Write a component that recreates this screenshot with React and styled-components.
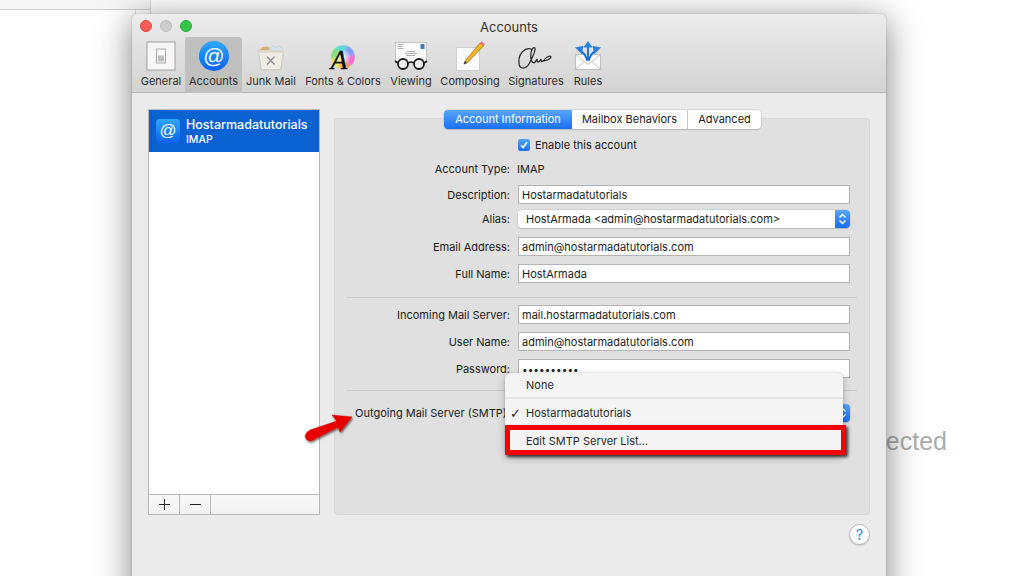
import React from "react";
import styled, { createGlobalStyle } from "styled-components";

const Global = createGlobalStyle`
  html, body { margin: 0; padding: 0; height: 100%; background: #fff; overflow: hidden; }
  * { box-sizing: border-box; }
  #root { height: 100%; }
`;

const font = `Inter, "Liberation Sans", Arial, sans-serif`;

const Page = styled.div`
  position: relative;
  width: 1024px;
  height: 576px;
  background: #fff;
  overflow: hidden;
  font-family: ${font};
  padding: 14px 0 0 132px;
`;
const BehindColumn = styled.div`
  position: absolute;
  left: 0;
  top: 0;
  width: 151px;
  height: 576px;
  background: #fff;
  border-right: 1px solid #dcdcdc;
`;
const BehindStrip = styled.div`
  position: absolute;
  left: 0;
  top: 0;
  width: 150px;
  height: 10px;
  background: #f6f6f6;
  border-bottom: 1px solid #cfcfcf;
`;
const BehindNotch = styled.div`
  position: absolute;
  left: 135px;
  top: 10px;
  width: 1px;
  height: 5px;
  background: #d8d8d8;
`;
const BehindText = styled.div`
  position: absolute;
  left: 700px;
  width: 247px;
  top: 426px;
  text-align: right;
  font-family: "Liberation Sans", Arial, sans-serif;
  font-size: 25px;
  line-height: 30px;
  color: #adadad;
  white-space: nowrap;
`;
const Window = styled.div`
  position: relative;
  width: 754px;
  height: 600px;
  background: #ebebeb;
  border-radius: 5px 5px 0 0;
  box-shadow: 0 6px 34px rgba(0,0,0,0.5), 0 0 1px rgba(0,0,0,0.6);
`;
const TitleBar = styled.div`
  position: relative;
  height: 79px;
  background: linear-gradient(#ececec, #d3d3d3);
  border-bottom: 1px solid #b5b5b5;
  border-radius: 5px 5px 0 0;
  padding-top: 23px;
`;
const Lights = styled.div`
  position: absolute;
  left: 8px;
  top: 6px;
  display: flex;
  gap: 8px;
`;
const Light = styled.span`
  width: 12px;
  height: 12px;
  border-radius: 50%;
  background: ${(p) => p.$c};
  border: 1px solid ${(p) => p.$b};
`;
const Title = styled.div`
  position: absolute;
  left: 0;
  right: 0;
  top: 5px;
  text-align: center;
  font-size: 13px;
  line-height: 16px;
  color: #333;
`;
const Tools = styled.div`
  display: flex;
  align-items: stretch;
  padding-left: 8px;
  height: 56px;
`;
const Tool = styled.div`
  width: ${(p) => p.$w}px;
  margin-left: ${(p) => p.$ml || 0}px;
  display: flex;
  flex-direction: column;
  align-items: center;
  border-radius: ${(p) => (p.$active ? "3px 3px 0 0" : "0")};
  background: ${(p) => (p.$active ? "#c0c0c0" : "transparent")};
`;
const ToolIcon = styled.div`
  height: 37px;
  width: 100%;
  display: flex;
  align-items: center;
  justify-content: center;
`;
const ToolLabel = styled.div`
  font-size: 11px;
  line-height: 14px;
  color: #2d2d2d;
  white-space: nowrap;
`;
const Body = styled.div`
  display: flex;
  padding: 16px 16px 0 16px;
  align-items: flex-start;
`;
const ListBox = styled.div`
  width: 172px;
  height: 406px;
  border: 1px solid #b8b8b8;
  background: #fff;
  display: flex;
  flex-direction: column;
  flex: none;
`;
const AccountRow = styled.div`
  height: 42px;
  background: #0a62d2;
  display: flex;
  align-items: center;
  padding-left: 7px;
  gap: 6px;
  color: #fff;
`;
const AccountText = styled.div`
  display: flex;
  flex-direction: column;
`;
const AccountName = styled.div`
  font-size: 12.5px;
  line-height: 15px;
  font-weight: 500;
`;
const AccountType = styled.div`
  margin-top: 1px;
  font-size: 10.5px;
  line-height: 13px;
  font-weight: 500;
`;
const ListSpacer = styled.div`
  flex: 1;
`;
const ListFooter = styled.div`
  height: 20px;
  border-top: 1px solid #b8b8b8;
  background: linear-gradient(#f9f9f9, #f3f3f3);
  display: flex;
`;
const FooterBtn = styled.div`
  width: 31px;
  border-right: 1px solid #b8b8b8;
  display: flex;
  align-items: center;
  justify-content: center;
`;
const Panel = styled.div`
  position: relative;
  margin: 9px 0 0 14px;
  width: 536px;
  height: 397px;
  background: #e0e0e0;
  border: 1px solid #d8d8d8;
  border-radius: 4px;
  padding-top: 16px;
`;
const Tabs = styled.div`
  position: absolute;
  left: 109px;
  top: -9px;
  display: flex;
  height: 19px;
  border-radius: 4px;
  background: #fff;
  box-shadow: 0 0 0 0.5px #c4c4c4, 0 1px 1px rgba(0,0,0,0.22);
  font-size: 11px;
`;
const Tab = styled.div`
  width: ${(p) => p.$w}px;
  display: flex;
  align-items: center;
  justify-content: center;
  padding-bottom: 1px;
  color: ${(p) => (p.$on ? "#fff" : "#222")};
  background: ${(p) => (p.$on ? "linear-gradient(#58a6fb, #1a6ff0)" : "transparent")};
  border-radius: ${(p) => (p.$on ? "4px 0 0 4px" : "0")};
  border-right: ${(p) => (p.$sep ? "1px solid #c8c8c8" : "none")};
`;
const Row = styled.div`
  display: flex;
  align-items: center;
  height: ${(p) => p.$h || 19}px;
  margin-top: ${(p) => p.$mt || 0}px;
  font-size: 11px;
  color: #1a1a1a;
`;
const Label = styled.div`
  width: 175px;
  white-space: nowrap;
  flex: none;
  display: flex;
  justify-content: flex-end;
`;
const Control = styled.div`
  margin-left: 8px;
  width: 332px;
  flex: none;
`;
const Value = styled.div`
  margin-left: 7px;
`;
const Field = styled.div`
  height: ${(p) => p.$h || 19}px;
  width: 332px;
  background: #fff;
  border: 1px solid #b4b4b4;
  padding-left: 3px;
  display: flex;
  align-items: center;
  font-size: 11px;
  color: #222;
`;
const Dots = styled.span`
  font-size: 10px;
  letter-spacing: 0.05px;
  color: #222;
`;
const Select = styled.div`
  position: relative;
  width: 332px;
  height: 18px;
  background: #fff;
  border-radius: 4px;
  box-shadow: 0 0 0 0.5px #c4c4c4, 0 1px 1px rgba(0,0,0,0.22);
  padding-left: 8px;
  display: flex;
  align-items: center;
  font-size: 11px;
  color: #222;
`;
const SelectArrow = styled.div`
  position: absolute;
  right: 0;
  top: 0;
  width: 15px;
  height: 18px;
  border-radius: 0 4px 4px 0;
  background: linear-gradient(#5aa7fb, #176bee);
  display: flex;
  align-items: center;
  justify-content: center;
`;
const Checkbox = styled.div`
  width: 12px;
  height: 12px;
  border-radius: 2.5px;
  background: linear-gradient(#56a5fb, #1b70f0);
  display: flex;
  align-items: center;
  justify-content: center;
`;
const CheckLabel = styled.div`
  display: flex;
  align-items: center;
  gap: 5px;
`;
const Divider = styled.div`
  height: 1px;
  background: #c9c9c9;
  margin: ${(p) => p.$m};
  margin-left: 12px;
  margin-right: 12px;
`;
const Popup = styled.div`
  position: absolute;
  left: 373px;
  top: 359px;
  width: 338px;
  height: 82px;
  background: #f4f4f4;
  border-radius: 5px;
  box-shadow: 0 0 1px rgba(0,0,0,0.35), 0 3px 8px rgba(0,0,0,0.25);
  font-size: 11px;
  color: #2a2a2a;
  display: flex;
  flex-direction: column;
  z-index: 3;
`;
const PopupItem = styled.div`
  position: relative;
  height: ${(p) => p.$h}px;
  padding-left: 21px;
  display: flex;
  align-items: center;
  flex: none;
`;
const PopupSep = styled.div`
  height: 1.5px;
  background: #e3e3e3;
  flex: none;
`;
const Tick = styled.span`
  position: absolute;
  left: 5px;
  font-family: "DejaVu Sans", sans-serif;
  font-size: 13px;
  font-weight: 700;
  color: #222;
`;
const RedBox = styled.div`
  position: absolute;
  left: 373px;
  top: 411px;
  width: 341px;
  height: 30px;
  border: 5px solid #f50000;
  box-shadow: 2px 2px 3px rgba(0,0,0,0.75);
  z-index: 4;
`;
const Arrow = styled.svg`
  position: absolute;
  left: 170px;
  top: 394px;
  z-index: 4;
  overflow: visible;
`;
const Help = styled.div`
  position: absolute;
  left: 717px;
  top: 510px;
  width: 21px;
  height: 21px;
  border-radius: 50%;
  background: #fff;
  border: 1px solid #b9b9b9;
  box-shadow: 0 1px 1px rgba(0,0,0,0.15);
  color: #2a80f5;
  font-size: 14px;
  font-weight: 400;
  display: flex;
  align-items: center;
  justify-content: center;
`;

const GeneralIcon = () => (
  <svg width="32" height="32" viewBox="0 0 32 32">
    <rect x="2" y="2" width="28" height="28" fill="#f7f7f7" stroke="#a0a0a0" />
    <rect x="11.5" y="9" width="9" height="14" fill="#f2f2f2" stroke="#9c9c9c" strokeWidth=".8" />
    <rect x="13" y="10.5" width="6" height="5" fill="#fff" />
    <rect x="13" y="15.5" width="6" height="6" fill="#bcc2c2" />
  </svg>
);
const AtIcon = ({ s = 30, r = 15, square }) => (
  <svg width={s} height={s} viewBox="0 0 30 30">
    <defs>
      <linearGradient id={square ? "atg2" : "atg"} x1="0" y1="0" x2="0" y2="1">
        <stop offset="0" stopColor="#2fa8fb" />
        <stop offset="1" stopColor="#0a62ef" />
      </linearGradient>
    </defs>
    {square ? (
      <rect width="30" height="30" rx="5" fill={`url(#atg2)`} />
    ) : (
      <circle cx="15" cy="15" r={r} fill={`url(#atg)`} />
    )}
    <text x="15" y="21.5" textAnchor="middle" fontFamily={`"Liberation Sans", sans-serif`} fontSize="21" fill="#fff">@</text>
  </svg>
);
const JunkIcon = () => (
  <svg width="28" height="31" viewBox="0 -5 32 35.4">
    <path d="M3 6 Q8 0 15 4 L13 8 H3Z" fill="#d9b27a" />
    <path d="M14 5 Q18 0 22 4 Q26 -1 29 5 L28 8 H14Z" fill="#d5e4ec" stroke="#aebdc6" strokeWidth=".5" />
    <path d="M1.5 7.5 H30.5 L27 29 H5Z" fill="#eeece4" stroke="#c6c3b9" />
    <rect x="1" y="6.5" width="30" height="3" fill="#dad7cd" />
    <path d="M11.5 14 L20 23 M20 14 L11.5 23" stroke="#8d8a80" strokeWidth="1.6" />
  </svg>
);
const wedge = (a0, a1) => {
  const rad = (d) => (d * Math.PI) / 180;
  const x0 = 15 + 13 * Math.cos(rad(a0));
  const y0 = 16 + 13 * Math.sin(rad(a0));
  const x1 = 15 + 13 * Math.cos(rad(a1));
  const y1 = 16 + 13 * Math.sin(rad(a1));
  return `M15 16 L${x0} ${y0} A13 13 0 0 1 ${x1} ${y1}Z`;
};
const wheelColors = ["#f36bd0", "#f5a05a", "#f3e35c", "#7fe07a", "#62d8d8", "#7f9cf5"];
const FontsIcon = () => (
  <svg width="30" height="30" viewBox="0 0 30 30" overflow="visible">
    <defs>
      <clipPath id="wheelClip"><circle cx="15" cy="16" r="12" /></clipPath>
      <filter id="wheelBlur"><feGaussianBlur stdDeviation="1.6" /></filter>
      <radialGradient id="wheelCentre">
        <stop offset="0" stopColor="#fff" />
        <stop offset="1" stopColor="#fff" stopOpacity="0" />
      </radialGradient>
    </defs>
    <g clipPath="url(#wheelClip)">
      <g filter="url(#wheelBlur)">
        {wheelColors.map((c, i) => (
          <path key={c} d={wedge(i * 60 - 10, i * 60 + 50)} fill={c} />
        ))}
      </g>
      <circle cx="15" cy="16" r="8" fill="url(#wheelCentre)" />
    </g>
    <text x="11" y="27.5" textAnchor="middle" fontFamily={`"Liberation Serif", serif`} fontStyle="italic" fontSize="27" stroke="#0c0c0c" strokeWidth=".35" fill="#0c0c0c">A</text>
  </svg>
);
const ViewingIcon = () => (
  <svg width="34" height="30" viewBox="0 0 34 30">
    <rect x="1.5" y="1.5" width="31" height="20" fill="#fbfbfb" stroke="#c4c4c4" />
    <rect x="26.5" y="3" width="4" height="5" fill="#3f7fb5" />
    <path d="M3.5 3.5h6M3.5 5.5h5M3.5 7.5h6M13 10.5h8M11 12.5h12M12 14.5h9" stroke="#8d8d8d" strokeWidth=".7" />
    <circle cx="9" cy="23" r="5" fill="#f2f2f2" fillOpacity=".85" stroke="#1c1c1c" strokeWidth="1.8" />
    <circle cx="25" cy="23" r="5" fill="#f2f2f2" fillOpacity=".85" stroke="#1c1c1c" strokeWidth="1.8" />
    <path d="M14 22 Q17 20 20 22 M4 22 L1 20 M30 22 L33 20" stroke="#1c1c1c" strokeWidth="1.6" fill="none" />
  </svg>
);
const ComposingIcon = () => (
  <svg width="32" height="32" viewBox="0 0 32 32">
    <rect x="2.5" y="7.5" width="23" height="23" fill="#fbfbfb" stroke="#cfcfcf" />
    <path d="M11 21 L26 3 L29.5 6 L13 23 L10 24Z" fill="#f2b71f" stroke="#7c5a10" strokeWidth=".6" />
    <path d="M26 3 L27.5 1.2 L31 4 L29.5 6Z" fill="#e8788c" />
    <path d="M11 21 L10 24 L13 23Z" fill="#333" />
  </svg>
);
const SignatureIcon = () => (
  <svg width="36" height="30" viewBox="0 -5 36 30">
    <path d="M13 3 C7 1 0 8 1 17 C1 23 7 24 11 18 C13 14 18 5 17 2 C15 0 12 5 13 13 C14 18 17 18 19 13 C19 17 21 17 23 13 C23 17 25 16 27 13 C28 11 33 9 33 11 C33 13 28 15 24 15" fill="none" stroke="#262626" strokeWidth="1.25" strokeLinecap="round" />
  </svg>
);
const RulesIcon = () => (
  <svg width="30" height="32" viewBox="0 0 30 32">
    <rect x="1.5" y="14.5" width="27" height="16" fill="#fbfbfb" stroke="#bcbcbc" />
    <path d="M2 15 L15 25 L28 15 M2 30 L11 22 M28 30 L19 22" fill="none" stroke="#c3c3c3" />
    <path d="M15 21 V6 M14 21 Q13 14 6 10 M16 21 Q17 14 24 10" fill="none" stroke="#1a6fd3" strokeWidth="2" />
    <path d="M15 0 L20 7 H10Z" fill="#2a82dd" />
    <path d="M1 7 L10 5 L8.5 14Z" fill="#2a82dd" />
    <path d="M29 7 L20 5 L21.5 14Z" fill="#2a82dd" />
  </svg>
);

const tools = [
  { name: "General", w: 42, icon: <GeneralIcon /> },
  { name: "Accounts", w: 57, ml: 3, active: true, icon: <AtIcon /> },
  { name: "Junk Mail", w: 50, ml: 4, icon: <JunkIcon /> },
  { name: "Fonts & Colors", w: 78, ml: 8, icon: <FontsIcon /> },
  { name: "Viewing", w: 46, ml: 6, icon: <ViewingIcon /> },
  { name: "Composing", w: 58, ml: 7, icon: <ComposingIcon /> },
  { name: "Signatures", w: 56, ml: 9, icon: <SignatureIcon /> },
  { name: "Rules", w: 28, ml: 10, icon: <RulesIcon /> },
];

const Updown = () => (
  <svg width="9" height="12" viewBox="0 0 9 12">
    <path d="M1.5 4.5 L4.5 1.5 L7.5 4.5 M1.5 7.5 L4.5 10.5 L7.5 7.5" fill="none" stroke="#fff" strokeWidth="1.4" />
  </svg>
);

export default function App() {
  return (
    <Page>
      <Global />
      <BehindColumn />
      <BehindStrip />
      <BehindNotch />
      <BehindText>No Message Selected</BehindText>
      <Window>
        <TitleBar>
          <Lights>
            <Light $c="#fc5b57" $b="#e2463f" />
            <Light $c="#cdcdcd" $b="#bdbdbd" />
            <Light $c="#33c748" $b="#2aae3a" />
          </Lights>
          <Title>Accounts</Title>
          <Tools>
            {tools.map((t) => (
              <Tool key={t.name} $w={t.w} $ml={t.ml} $active={t.active}>
                <ToolIcon>{t.icon}</ToolIcon>
                <ToolLabel>{t.name}</ToolLabel>
              </Tool>
            ))}
          </Tools>
        </TitleBar>
        <Body>
          <ListBox>
            <AccountRow>
              <AtIcon s={24} square />
              <AccountText>
                <AccountName>Hostarmadatutorials</AccountName>
                <AccountType>IMAP</AccountType>
              </AccountText>
            </AccountRow>
            <ListSpacer />
            <ListFooter>
              <FooterBtn>
                <svg width="13" height="13" viewBox="0 0 13 13"><path d="M6.5 1v11M1 6.5h11" stroke="#222" strokeWidth="1" /></svg>
              </FooterBtn>
              <FooterBtn>
                <svg width="13" height="13" viewBox="0 0 13 13"><path d="M1 6.5h11" stroke="#222" strokeWidth="1" /></svg>
              </FooterBtn>
            </ListFooter>
          </ListBox>
          <Panel>
            <Tabs>
              <Tab $on $w={128}>Account Information</Tab>
              <Tab $w={116} $sep>Mailbox Behaviors</Tab>
              <Tab $w={73}>Advanced</Tab>
            </Tabs>
            <Row $h={19}>
              <Label />
              <Control>
                <CheckLabel>
                  <Checkbox>
                    <svg width="10" height="10" viewBox="0 0 10 10"><path d="M2 5.2 L4.2 7.5 L8 2.2" fill="none" stroke="#fff" strokeWidth="1.6" /></svg>
                  </Checkbox>
                  Enable this account
                </CheckLabel>
              </Control>
            </Row>
            <Row $mt={5}>
              <Label>Account Type:</Label>
              <Value>IMAP</Value>
            </Row>
            <Row $mt={7}>
              <Label>Description:</Label>
              <Control><Field>Hostarmadatutorials</Field></Control>
            </Row>
            <Row $mt={5}>
              <Label>Alias:</Label>
              <Control>
                <Select>
                  HostArmada &lt;admin@hostarmadatutorials.com&gt;
                  <SelectArrow><Updown /></SelectArrow>
                </Select>
              </Control>
            </Row>
            <Row $mt={9}>
              <Label>Email Address:</Label>
              <Control><Field>admin@hostarmadatutorials.com</Field></Control>
            </Row>
            <Row $mt={8}>
              <Label>Full Name:</Label>
              <Control><Field>HostArmada</Field></Control>
            </Row>
            <Divider $m="14px 0 0" />
            <Row $mt={7}>
              <Label>Incoming Mail Server:</Label>
              <Control><Field>mail.hostarmadatutorials.com</Field></Control>
            </Row>
            <Row $mt={8}>
              <Label>User Name:</Label>
              <Control><Field>admin@hostarmadatutorials.com</Field></Control>
            </Row>
            <Row $mt={8}>
              <Label>Password:</Label>
              <Control><Field><Dots>••••••••••</Dots></Field></Control>
            </Row>
            <Divider $m="12px 0 0" />
            <Row $mt={12}>
              <Label>Outgoing Mail Server (SMTP):</Label>
              <Control>
                <Select>
                  <SelectArrow><Updown /></SelectArrow>
                </Select>
              </Control>
            </Row>
          </Panel>
        </Body>
        <Popup>
          <PopupItem $h={24}>None</PopupItem>
          <PopupSep />
          <PopupItem $h={29}><Tick>✓</Tick>Hostarmadatutorials</PopupItem>
          <PopupSep />
          <PopupItem $h={24}>Edit SMTP Server List…</PopupItem>
        </Popup>
        <RedBox />
        <Arrow width="50" height="34" viewBox="0 0 50 34">
          <defs>
            <filter id="ds" x="-20%" y="-20%" width="150%" height="150%">
              <feDropShadow dx="1" dy="1.5" stdDeviation="1" floodColor="#000" floodOpacity=".6" />
            </filter>
          </defs>
          <path d="M3 28 Q4 24 8 22 L35 13 L30 7 L50 9 L38 24 L36 19 L9 33 Q4 33 3 28Z" fill="#e80000" stroke="#e80000" strokeWidth=".5" strokeLinejoin="round" filter="url(#ds)" />
        </Arrow>
        <Help>?</Help>
      </Window>
    </Page>
  );
}
